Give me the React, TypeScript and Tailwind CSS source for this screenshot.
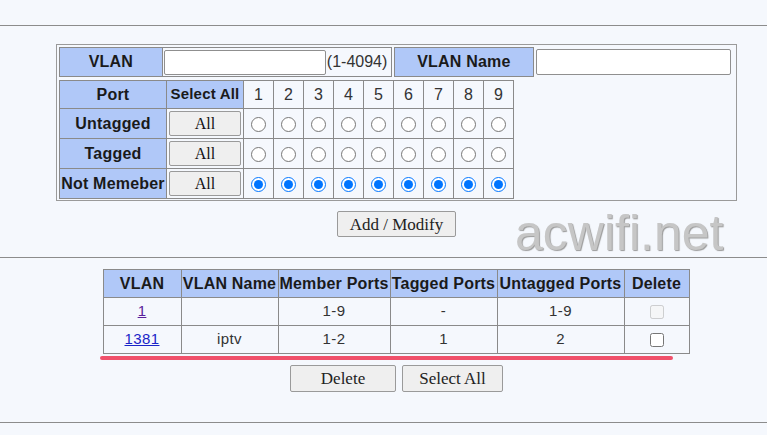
import React from 'react';

const ports = [1, 2, 3, 4, 5, 6, 7, 8, 9];

const sans = { fontFamily: '"Liberation Sans", Arial, sans-serif' };
const serif = { fontFamily: '"Liberation Serif", "Times New Roman", serif' };

const vlans = [
    { id: '1', name: '', member: '1-9', tagged: '-', untagged: '1-9', fixed: true },
    { id: '1381', name: 'iptv', member: '1-2', tagged: '1', untagged: '2', fixed: false },
];

function PortRow({ label, kind }: { label: string; kind: 'u' | 't' | 'n' }) {
    return (
        <tr className="h-[30px]">
            <td className="border border-[#8a8a8a] bg-[#b0c8f8] text-center font-bold text-[16px] tracking-[0.2px] text-[#1a1a1a] px-0 whitespace-nowrap">
                {label}
            </td>
            <td className="border border-[#8a8a8a] text-center">
                <button
                    className="w-[72px] h-[25px] bg-[#efefef] border border-[#9a9a9a] rounded-[2px] text-[16px] text-[#111]"
                    style={serif}
                >
                    All
                </button>
            </td>
            {ports.map((p) => (
                <td key={p} className="border border-[#8a8a8a] text-center">
                    <input
                        type="radio"
                        name={`port${p}`}
                        defaultChecked={kind === 'n'}
                        className="w-[15px] h-[15px] align-middle m-0"
                    />
                </td>
            ))}
        </tr>
    );
}

export default function App() {
    return (
        <div className="relative w-[767px] h-[435px] overflow-hidden bg-[#f5f8fd] text-[#333]" style={sans}>
            <div className="h-[26px] border-b border-[#8c8c8c]" />

            {/* VLAN settings */}
            <div className="ml-[56px] w-[681px] pt-[18px]">
                <div className="border border-[#9a9a9a] p-[2px] h-[157px]">
                    <div className="flex h-[30px]">
                        <div className="w-[104px] border border-[#8a8a8a] bg-[#b0c8f8] flex items-center justify-center font-bold text-[16px] tracking-[0.2px] text-[#1a1a1a]">
                            VLAN
                        </div>
                        <div className="w-[229px] border border-l-0 border-[#8a8a8a] flex items-center pl-[1px]">
                            <input type="text" className="w-[162px] h-[25px] bg-white border border-[#8f8f8f] rounded-[2px] outline-none" />
                            <span className="text-[16px] text-[#333] ml-[1px]">(1-4094)</span>
                        </div>
                        <div className="w-[141px] ml-[2px] border border-[#8a8a8a] bg-[#b0c8f8] flex items-center justify-center font-bold text-[16px] tracking-[0.2px] text-[#1a1a1a]">
                            VLAN Name
                        </div>
                        <div className="w-[200px] flex items-center pl-[2px]">
                            <input type="text" className="w-[195px] h-[26px] bg-white border border-[#8f8f8f] rounded-[2px] outline-none" />
                        </div>
                    </div>

                    <table className="mt-[3px] border-collapse text-[16px]">
                        <tbody>
                            <tr className="h-[28px]">
                                <td className="w-[107px] border border-[#8a8a8a] bg-[#b0c8f8] text-center font-bold tracking-[0.2px] text-[#1a1a1a]">Port</td>
                                <td className="w-[77px] border border-[#8a8a8a] bg-[#b0c8f8] text-center font-bold text-[15px] tracking-[0.2px] text-[#1a1a1a] whitespace-nowrap">Select All</td>
                                {ports.map((p) => (
                                    <td key={p} className="w-[30px] border border-[#8a8a8a] text-center text-[#333]">{p}</td>
                                ))}
                            </tr>
                            <PortRow label="Untagged" kind="u" />
                            <PortRow label="Tagged" kind="t" />
                            <PortRow label="Not Memeber" kind="n" />
                        </tbody>
                    </table>
                </div>

                <div className="flex justify-center mt-[10px]">
                    <button
                        className="w-[119px] h-[26px] bg-[#efefef] border border-[#9a9a9a] rounded-[2px] text-[17px] text-[#222]"
                        style={serif}
                    >
                        Add / Modify
                    </button>
                </div>
            </div>

            <div className="mt-[20px] border-b border-[#8c8c8c]" />

            {/* VLAN list */}
            <div className="ml-[56px] w-[681px] pt-[11px] flex flex-col items-center">
                <table className="border-collapse text-[16px] ml-[-1px]">
                    <thead>
                        <tr className="h-[28px] bg-[#b0c8f8] font-bold tracking-[0.2px] text-[#1a1a1a]">
                            <td className="w-[78px] border border-[#8a8a8a] text-center">VLAN</td>
                            <td className="w-[97px] border border-[#8a8a8a] text-center whitespace-nowrap">VLAN Name</td>
                            <td className="w-[112px] border border-[#8a8a8a] text-center whitespace-nowrap">Member Ports</td>
                            <td className="w-[107px] border border-[#8a8a8a] text-center whitespace-nowrap">Tagged Ports</td>
                            <td className="w-[127px] border border-[#8a8a8a] text-center whitespace-nowrap">Untagged Ports</td>
                            <td className="w-[65px] border border-[#8a8a8a] text-center">Delete</td>
                        </tr>
                    </thead>
                    <tbody className="text-[15px] tracking-[0.4px]">
                        {vlans.map((v) => (
                            <tr key={v.id} className="h-[28px]">
                                <td className="border border-[#8a8a8a] text-center">
                                    <a href="#" className={`underline ${v.fixed ? 'text-[#5b1f9b]' : 'text-[#1a25c8]'}`}>{v.id}</a>
                                </td>
                                <td className="border border-[#8a8a8a] text-center">{v.name}</td>
                                <td className="border border-[#8a8a8a] text-center">{v.member}</td>
                                <td className="border border-[#8a8a8a] text-center">{v.tagged}</td>
                                <td className="border border-[#8a8a8a] text-center">{v.untagged}</td>
                                <td className="border border-[#8a8a8a] text-center">
                                    <input type="checkbox" disabled={v.fixed} className="w-[14px] h-[14px] align-middle m-0" />
                                </td>
                            </tr>
                        ))}
                    </tbody>
                </table>
                <div className="w-[573px] h-[4px] mt-[2px] rounded-full bg-[#f0506a] self-start ml-[44px]" />

                <div className="flex gap-[6px] mt-[5px]">
                    <button
                        className="w-[106px] h-[27px] bg-[#efefef] border border-[#9a9a9a] rounded-[2px] text-[17px] text-[#222]"
                        style={serif}
                    >
                        Delete
                    </button>
                    <button
                        className="w-[101px] h-[27px] bg-[#efefef] border border-[#9a9a9a] rounded-[2px] text-[17px] text-[#222]"
                        style={serif}
                    >
                        Select All
                    </button>
                </div>
            </div>

            <div className="mt-[30px] border-b border-[#8c8c8c]" />

            {/* watermark */}
            <div
                className="absolute left-[515px] top-[208px] text-[50px] leading-none text-[#c6c6c6] pointer-events-none"
                style={{ ...sans, textShadow: '1px 1px 1px #9a9a9a' }}
            >
                acwifi.net
            </div>
        </div>
    );
}
